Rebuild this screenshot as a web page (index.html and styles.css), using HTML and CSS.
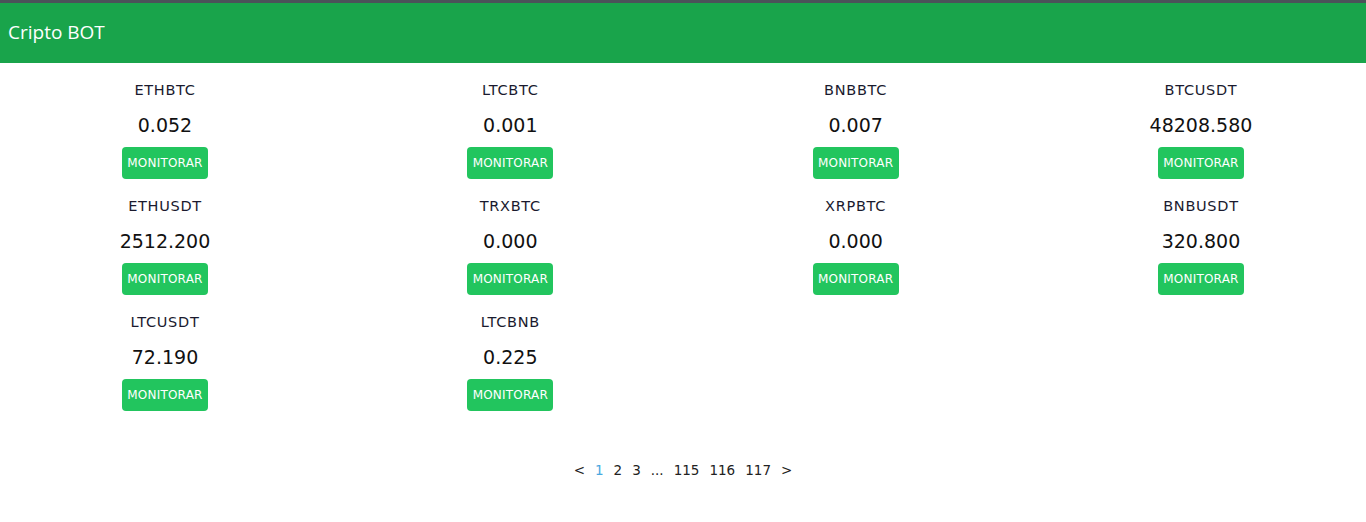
FILE: index.html
```html
<!DOCTYPE html>
<html lang="pt">
<head>
<meta charset="utf-8">
<title>Cripto BOT</title>
<link rel="stylesheet" href="styles.css">
</head>
<body>
<header class="topbar">
  <span class="brand">Cripto BOT</span>
</header>
<main class="content">
  <div class="grid">
    <div class="coin"><div class="sym">ETHBTC</div><div class="price">0.052</div><button class="btn">MONITORAR</button></div>
    <div class="coin"><div class="sym">LTCBTC</div><div class="price">0.001</div><button class="btn">MONITORAR</button></div>
    <div class="coin"><div class="sym">BNBBTC</div><div class="price">0.007</div><button class="btn">MONITORAR</button></div>
    <div class="coin"><div class="sym">BTCUSDT</div><div class="price">48208.580</div><button class="btn">MONITORAR</button></div>
    <div class="coin"><div class="sym">ETHUSDT</div><div class="price">2512.200</div><button class="btn">MONITORAR</button></div>
    <div class="coin"><div class="sym">TRXBTC</div><div class="price">0.000</div><button class="btn">MONITORAR</button></div>
    <div class="coin"><div class="sym">XRPBTC</div><div class="price">0.000</div><button class="btn">MONITORAR</button></div>
    <div class="coin"><div class="sym">BNBUSDT</div><div class="price">320.800</div><button class="btn">MONITORAR</button></div>
    <div class="coin"><div class="sym">LTCUSDT</div><div class="price">72.190</div><button class="btn">MONITORAR</button></div>
    <div class="coin"><div class="sym">LTCBNB</div><div class="price">0.225</div><button class="btn">MONITORAR</button></div>
  </div>
  <nav class="pager">
    <span class="pg">&lt;</span>
    <span class="pg active">1</span>
    <span class="pg">2</span>
    <span class="pg">3</span>
    <span class="pg">...</span>
    <span class="pg">115</span>
    <span class="pg">116</span>
    <span class="pg">117</span>
    <span class="pg">&gt;</span>
  </nav>
</main>
</body>
</html>
```
FILE: styles.css
```css
* { box-sizing: border-box; }
html, body { margin: 0; padding: 0; background: #fff; }
body { font-family: "DejaVu Sans", "Noto Sans", sans-serif; color: #111; }

.topbar {
  height: 63px;
  background: #19a44b;
  border-top: 3px solid #4b5259;
  display: flex;
  align-items: center;
  padding: 0 8px;
}
.brand {
  color: #fff;
  font-family: "Open Sans", "Noto Sans", sans-serif;
  font-size: 19px;
  margin-top: -2px;
}

.content { overflow: hidden; }
.grid {
  display: grid;
  grid-template-columns: repeat(4, 345.33px);
  margin-left: -7.7px;
  padding-top: 18px;
  row-gap: 18px;
}
.coin {
  display: flex;
  flex-direction: column;
  align-items: center;
  height: 98px;
}
.sym {
  font-size: 14.5px;
  line-height: 18px;
  letter-spacing: 0.7px;
  color: #1a1a2e;
}
.price {
  font-size: 19px;
  line-height: 24px;
  margin-top: 14px;
  color: #111;
}
.btn {
  margin-top: 10px;
  width: 86px;
  height: 32px;
  border: 0;
  border-radius: 4px;
  background: #22c55e;
  color: #fff;
  font-family: "DejaVu Sans", sans-serif;
  font-size: 12px;
  padding: 0;
  letter-spacing: 0.2px;
}

.pager {
  display: flex;
  justify-content: center;
  margin-top: 51px;
  margin-left: 0;
  font-size: 13.5px;
}
.pg { padding: 0 5px; color: #222; }
.pg.active { color: #4aa8e0; }
```
